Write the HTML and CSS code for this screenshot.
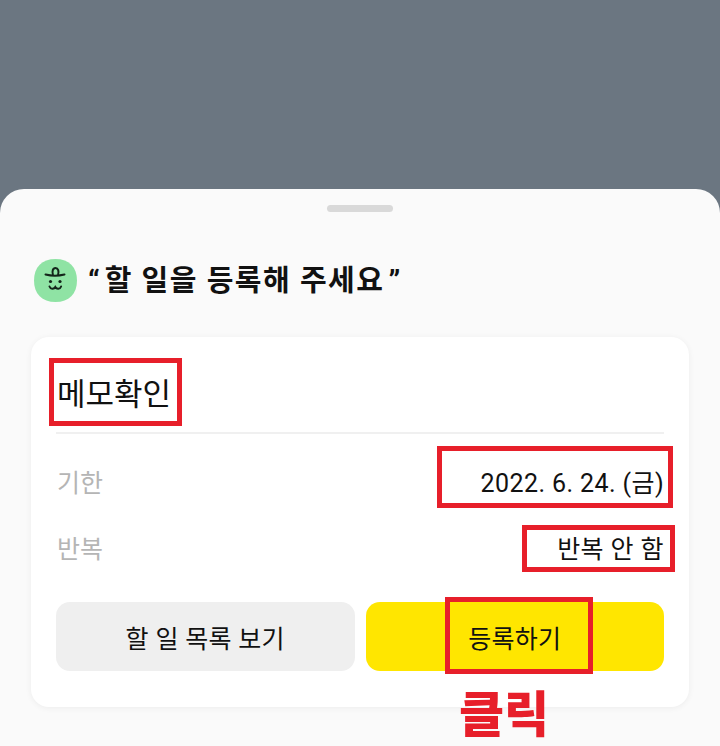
FILE: index.html
```html
<!DOCTYPE html>
<html lang="ko">
<head>
    <meta charset="UTF-8">
    <meta name="viewport" content="width=device-width, initial-scale=1.0">
    <title>할 일 등록</title>
    <link rel="stylesheet" href="styles.css">
</head>
<body>

<div class="sheet">
    <div class="handle"></div>

    <div class="title-row">
        <svg class="avatar" width="43" height="43" viewBox="0 0 43 43">
            <path d="M21.500 0C35 0 43 8 43 21.500S35 43 21.500 43 0 35 0 21.500 8 0 21.500 0Z" fill="#8fe3a4"/>
            <path d="M11.500 15.500c5 1.200 14 1.200 19 0" fill="none" stroke="#14241a" stroke-width="2" stroke-linecap="round"/>
            <path d="M19 16c-1.200-3.500-.2-7 2.500-7s3.700 3.500 2.500 7" fill="none" stroke="#14241a" stroke-width="2"/>
            <circle cx="16.500" cy="22.500" r="1.600" fill="#14241a"/>
            <circle cx="26" cy="22.500" r="1.600" fill="#14241a"/>
            <path d="M15.500 27.500c1 2.800 4.500 3 5.800 .6 1.300 2.400 4.800 2.200 5.800-.6" fill="none" stroke="#14241a" stroke-width="2" stroke-linecap="round"/>
        </svg>
        <h1>“<span class="title-text">할 일을 등록해 주세요</span>”</h1>
    </div>

    <div class="card">
        <div class="memo">메모확인</div>
        <div class="row row-first">
            <span class="label">기한</span>
            <span class="value">2022. 6. 24. (금)</span>
        </div>
        <div class="row">
            <span class="label">반복</span>
            <span class="value">반복 안 함</span>
        </div>
        <div class="buttons">
            <button class="btn btn-gray">할 일 목록 보기</button>
            <button class="btn btn-yellow">등록하기</button>
        </div>
    </div>
</div>

<!-- 빨간 표시 -->
<div class="mark mark-memo"></div>
<div class="mark mark-date"></div>
<div class="mark mark-repeat"></div>
<div class="mark mark-submit"></div>
<div class="click-label">클릭</div>

</body>
</html>
```

FILE: styles.css
```css
html, body {
    margin: 0;
    padding: 0;
}

body {
    position: relative;
    width: 720px;
    height: 746px;
    overflow: hidden;
    background-color: #6b7681;
    font-family: "Roboto", "Noto Sans CJK KR", sans-serif;
    color: #111;
}

.sheet {
    box-sizing: border-box;
    height: 557px;
    margin-top: 189px;
    padding: 16px 31px 0;
    background-color: #fafafa;
    border-radius: 24px 24px 0 0;
}

.handle {
    width: 66px;
    height: 7px;
    margin: 0 auto;
    background-color: #d9d9d9;
    border-radius: 4px;
}

.title-row {
    display: flex;
    align-items: center;
    gap: 11px;
    margin: 47px 0 35px 3px;
}

.avatar {
    flex: none;
}

.title-row h1 {
    margin: 0;
    font-size: 29px;
    line-height: 40px;
    font-weight: 700;
    white-space: nowrap;
}

.title-text {
    margin: 0 4px 0 5px;
    letter-spacing: 1.500px;
}

.card {
    box-sizing: border-box;
    height: 370px;
    padding: 0 25px;
    background-color: #fff;
    border-radius: 18px;
    box-shadow: 0 1px 6px rgba(0, 0, 0, 0.06);
}

.memo {
    height: 97px;
    padding: 0 1px;
    box-sizing: border-box;
    border-bottom: 2px solid #f0f0f0;
    font-size: 31px;
    line-height: 116px;
}

.row {
    display: flex;
    justify-content: space-between;
    align-items: center;
    height: 40px;
    margin-top: 26px;
    font-size: 25px;
}

.row-first {
    margin-top: 27px;
}

.label {
    padding-left: 1px;
    color: #b5b5b5;
}

.value {
    color: #111;
    letter-spacing: 0.400px;
}

.buttons {
    display: flex;
    gap: 11px;
    margin-top: 35px;
}

.btn {
    flex: 1;
    height: 69px;
    padding: 0;
    border: none;
    border-radius: 14px;
    font-family: inherit;
    font-size: 25px;
    letter-spacing: 0.300px;
    color: #111;
}

.btn-gray {
    background-color: #efefef;
}

.btn-yellow {
    background-color: #ffe600;
}

.mark {
    position: absolute;
    box-sizing: border-box;
    border: 5px solid #e71f2a;
}

.mark-memo {
    left: 49px;
    top: 358px;
    width: 133px;
    height: 68px;
}

.mark-date {
    left: 437px;
    top: 446px;
    width: 236px;
    height: 62px;
}

.mark-repeat {
    left: 522px;
    top: 525px;
    width: 153px;
    height: 47px;
}

.mark-submit {
    left: 445px;
    top: 597px;
    width: 148px;
    height: 77px;
}

.click-label {
    position: absolute;
    left: 459px;
    top: 682px;
    font-size: 49px;
    line-height: 68px;
    font-weight: 900;
    color: #e71f2a;
    white-space: nowrap;
}
```
